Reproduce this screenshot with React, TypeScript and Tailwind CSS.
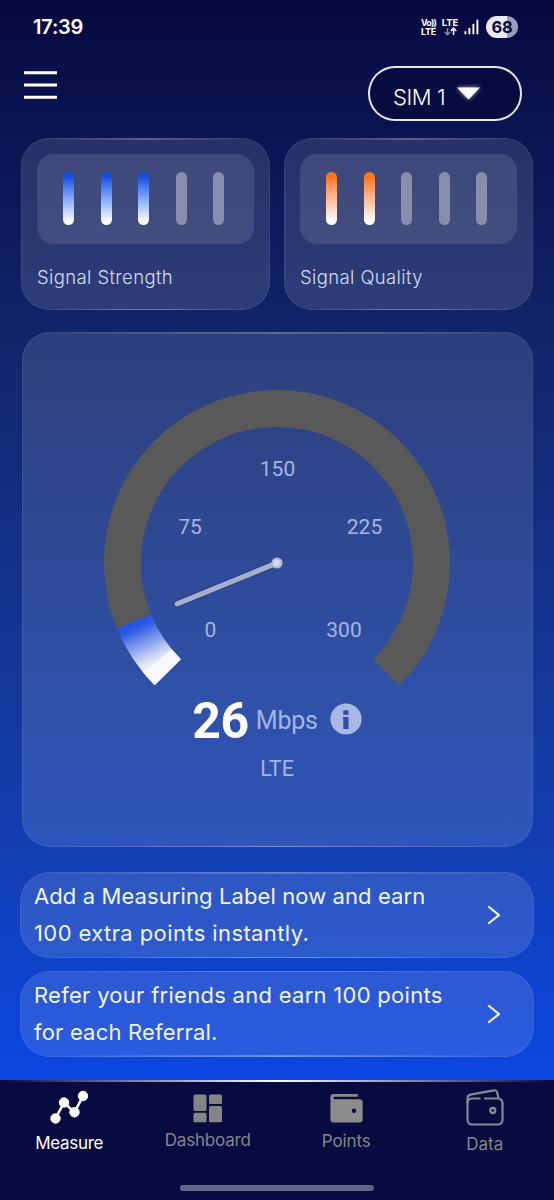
import type { ReactNode } from 'react';
import clsx from 'clsx';

interface GlassProps {
  className?: string;
  children: ReactNode;
}

// Translucent panel, its top and bottom edges light up towards the middle
function Glass({ className, children }: GlassProps) {
  return (
    <div className={clsx('relative bg-white/[0.12] border border-white/[0.07]', className)}>
      <span className="absolute -top-px left-6 right-6 h-[1.5px] bg-gradient-to-r from-transparent via-white/20 to-transparent" />
      <span className="absolute -bottom-px left-6 right-6 h-[1.5px] bg-gradient-to-r from-transparent via-white/30 to-transparent" />
      {children}
    </div>
  );
}

function StatusBar() {
  return (
    <div className="h-[54px] pl-[33px] pr-9 flex items-center justify-between text-white">
      <span className="text-[20px] font-semibold leading-none tracking-[-0.2px]">17:39</span>
      <div className="flex items-center">
        <div className="w-[17px] text-[9px] leading-[9px] font-bold text-center whitespace-nowrap tracking-[-0.3px]">
          <div className="tracking-[-0.8px]">Vo))</div>
          <div>LTE</div>
        </div>
        <div className="ml-[4px] w-[18px] flex flex-col items-center">
          <span className="text-[9.5px] leading-[9px] font-bold">LTE</span>
          <svg className="w-[13px] h-[9px]" viewBox="0 0 13 9" fill="none" strokeWidth="1.5">
            <path d="M3.5 1v6.5M.8 4.9l2.7 2.8 2.7-2.8" stroke="#8a8cab" />
            <path d="M9.5 8V1.2M6.8 4l2.7-2.8L12.2 4" stroke="white" />
          </svg>
        </div>
        <svg className="ml-[5px] w-[15px] h-[16px]" viewBox="0 0 15 16" stroke="white" strokeWidth="1.9" strokeLinecap="round">
          <path d="M1.4 13v1.6M5.4 9.6v5M9.4 5.8v8.8M13.4 1.4v13.2" />
        </svg>
        <div className="ml-[7px] w-[32px] h-[22px] rounded-full bg-gradient-to-r from-[#e9eaf3] from-66% to-[#9b9cb9] to-66% flex items-center justify-center">
          <span className="text-[16.5px] leading-none font-bold text-[#090c42] tracking-[-0.3px]">68</span>
        </div>
      </div>
    </div>
  );
}

function Header() {
  return (
    <div className="h-[84px] pl-6 pr-8 pt-[12px] flex items-start justify-between">
      <button className="mt-[5px] flex" aria-label="Menu">
        <svg className="w-[33px] h-[29px]" viewBox="0 0 33 29" stroke="white" strokeWidth="3">
          <path d="M0 1.8h33M0 14h33M0 26.2h33" />
        </svg>
      </button>
      <button className="w-[154px] h-[55px] pl-[23px] rounded-[27px] border-2 border-white/90 bg-[#080b40] flex items-center text-white">
        <span className="mt-[6px] text-[22px] leading-none font-light tracking-[-0.4px]">SIM 1</span>
        <svg className="ml-[8px] -mt-[1px] w-[30px] h-[22px] drop-shadow-[0_0_2px_rgba(255,255,255,0.7)]" viewBox="0 0 30 22">
          <path d="M4 5.5h23L15.5 17.5z" fill="white" />
        </svg>
      </button>
    </div>
  );
}

interface SignalCardProps {
  label: string;
  level: number;
  barClass: string;
}

function SignalCard({ label, level, barClass }: SignalCardProps) {
  return (
    <Glass className="w-[249px] h-[172px] rounded-[28px] px-[15px] pt-[15px]">
      <div className="h-[90px] rounded-[17px] bg-white/[0.11] pl-[26px] pt-[18px] flex gap-[26.5px]">
        {[0, 1, 2, 3, 4].map((i) => (
          <span
            key={i}
            className={clsx('w-[11px] h-[53px] rounded-full', i < level ? barClass : 'bg-[#898eae]')}
          />
        ))}
      </div>
      <div className="mt-[20px] text-[18.5px] leading-[26px] font-light text-[#d5dcf2] whitespace-nowrap tracking-[0.38px]">
        {label}
      </div>
    </Glass>
  );
}

const MAX_SPEED = 300;
const CX = 254;
const CY = 230;
const RADIUS = 154.5;

function point(angle: number, r: number) {
  const rad = (angle * Math.PI) / 180;
  return [CX + r * Math.cos(rad), CY + r * Math.sin(rad)];
}

function arc(from: number, to: number) {
  const [x1, y1] = point(from, RADIUS);
  const [x2, y2] = point(to, RADIUS);
  return `M${x1} ${y1}A${RADIUS} ${RADIUS} 0 ${to - from > 180 ? 1 : 0} 1 ${x2} ${y2}`;
}

const ticks = [
  { value: 0, x: 187.5, y: 304 },
  { value: 75, x: 167, y: 201 },
  { value: 150, x: 254.5, y: 143 },
  { value: 225, x: 341.5, y: 201 },
  { value: 300, x: 321, y: 304 },
];

function Gauge({ speed }: { speed: number }) {
  const end = 135 + (speed / MAX_SPEED) * 270;
  const [nx, ny] = point(end - 0.6, 108);

  return (
    <svg className="w-[509px] h-[360px] block" viewBox="0 0 509 360">
      <defs>
        <linearGradient id="speed" gradientUnits="userSpaceOnUse" x1="110" y1="284" x2="133" y2="335">
          <stop offset="0" stopColor="#1a4de8" />
          <stop offset="0.22" stopColor="#2f5be5" />
          <stop offset="0.85" stopColor="#dfe4f6" />
          <stop offset="1" stopColor="#f6f7fc" />
        </linearGradient>
      </defs>
      <path d={arc(end - 1, 405)} fill="none" stroke="#595959" strokeWidth="37" />
      <path d={arc(135, end - 0.6)} fill="none" stroke="url(#speed)" strokeWidth="37" />
      <path d={arc(135, 140.6)} fill="none" stroke="#f8f9fd" strokeWidth="37" />
      {ticks.map((t) => (
        <text
          key={t.value}
          x={t.x}
          y={t.y}
          textAnchor="middle"
          fill="#a5b5de"
          className="font-['Roboto',sans-serif] text-[21px]"
        >
          {t.value}
        </text>
      ))}
      <path d={`M${CX} ${CY}L${nx} ${ny}`} stroke="#26397d" strokeWidth="7" strokeLinecap="round" />
      <path d={`M${CX} ${CY}L${nx} ${ny}`} stroke="#a5aecd" strokeWidth="5.2" strokeLinecap="round" />
      <circle cx={CX} cy={CY} r="5.6" fill="#aeb8dc" />
      <circle cx={CX - 0.5} cy={CY} r="3.4" fill="#d5dbe9" />
    </svg>
  );
}

function SpeedCard() {
  return (
    <Glass className="w-[511px] h-[515px] rounded-[28px] font-['Roboto',sans-serif]">
      <Gauge speed={26} />
      <div className="h-[56px] flex items-center justify-center text-[#a5b5e2]">
        <span className="-mt-[1px] text-[50px] leading-none font-bold text-white tracking-[-0.4px]">26</span>
        <span className="ml-[7px] -mt-[2px] text-[25px] leading-none tracking-[-0.2px]">Mbps</span>
        <svg className="ml-[12px] -mt-[4px] w-[32px] h-[32px]" viewBox="0 0 32 32">
          <circle cx="16" cy="16" r="15.6" fill="#a9b8e3" />
          <path d="M13.3 7.2h5.2v4.6h-5.2zM13 14h5.5v12h-5.2V16H13z" fill="#2c4da8" />
        </svg>
      </div>
      <div className="mt-[7px] text-center text-[21.5px] leading-[26px] text-[#a5b5e2]">LTE</div>
    </Glass>
  );
}

interface PromoProps {
  lines: { text: string; spacing: string }[];
}

function Promo({ lines }: PromoProps) {
  return (
    <Glass className="w-[514px] h-[86px] rounded-[30px] pl-[13px] pr-[32px] flex items-center justify-between">
      <div className="text-[22px] leading-[37px] text-[#f1f4fd] whitespace-nowrap">
        {lines.map((line) => (
          <div key={line.text} className={line.spacing}>
            {line.text}
          </div>
        ))}
      </div>
      <svg className="w-[14px] h-[20px]" viewBox="0 0 14 20" fill="none" stroke="#eef2fd" strokeWidth="2.2" strokeLinecap="round" strokeLinejoin="round">
        <path d="M2 2l10 8.2L2 18" />
      </svg>
    </Glass>
  );
}

function MeasureIcon() {
  return (
    <svg className="w-[40px] h-[36px]" viewBox="0 0 40 36" fill="white" stroke="white">
      <path d="M6.5 28.5L15 12.5l10.5 9.8L34 6" fill="none" strokeWidth="2.6" />
      <circle cx="6.5" cy="28.5" r="4.7" />
      <circle cx="15" cy="12.5" r="4.7" />
      <circle cx="25.5" cy="22.3" r="4.7" />
      <circle cx="34" cy="6" r="4.7" />
    </svg>
  );
}

function DashboardIcon() {
  return (
    <svg className="w-[30px] h-[30px]" viewBox="0 0 30 30" fill="#858585">
      <rect x="0.500" y="0.500" width="13" height="16.500" rx="1.600" />
      <rect x="0.500" y="18.800" width="13" height="9.500" rx="1.600" />
      <rect x="16" y="0.500" width="13" height="9.500" rx="1.600" />
      <rect x="16" y="11.900" width="13" height="16.400" rx="1.600" />
    </svg>
  );
}

function PointsIcon() {
  return (
    <svg className="w-[33px] h-[30px]" viewBox="0 0 33 30">
      <path d="M27.8 0H3.6A3.2 3.2 0 0 0 .4 3.2V25.6a3 3 0 0 0 3 3H29.6a3 3 0 0 0 3-3V8.3a3 3 0 0 0-3-3H3.6V2.8H27.8z" fill="#8c8c8c" />
      <circle cx="24" cy="16.8" r="2.2" fill="#080b40" />
    </svg>
  );
}

function DataIcon() {
  return (
    <svg className="w-[38px] h-[37px]" viewBox="0 0 38 37" fill="none" stroke="#88898f" strokeWidth="2.2">
      <path d="M14.5 9.5H6A4.5 4.5 0 0 0 1.5 14v17A4.5 4.5 0 0 0 6 35.5h26a4.5 4.5 0 0 0 4.5-4.5V14A4.5 4.5 0 0 0 32 9.5H18.2" />
      <path d="M1.5 14V9.5q0-3.2 3-3.8L28 1.3q2.4-.3 3.2 2l1.3 6.2" />
      <circle cx="26.8" cy="21.5" r="2.5" strokeWidth="2.3" />
    </svg>
  );
}

const tabs = [
  { label: 'Measure', icon: <MeasureIcon />, box: 'pt-[10px]', text: 'mt-[6px] text-[17px] text-white tracking-[-0.3px]' },
  { label: 'Dashboard', icon: <DashboardIcon />, box: 'pt-[14px]', text: 'mt-[5px] text-[17px] text-[#85858b] tracking-[-0.2px]' },
  { label: 'Points', icon: <PointsIcon />, box: 'pt-[14px]', text: 'mt-[6px] text-[17px] text-[#85858b] tracking-[-0.1px]' },
  { label: 'Data', icon: <DataIcon />, box: 'pt-[9px]', text: 'mt-[7px] text-[17px] text-[#85858b] tracking-[0px]' },
];

function BottomNav() {
  return (
    <nav className="relative h-[120px] bg-[#080b40]">
      <span className="absolute top-0 inset-x-0 h-[2px] bg-gradient-to-r from-transparent via-white to-transparent" />
      <div className="grid grid-cols-4 h-[105px]">
        {tabs.map((tab) => (
          <button key={tab.label} className={clsx('flex flex-col items-center justify-start', tab.box)}>
            {tab.icon}
            <span className={clsx('leading-[22px]', tab.text)}>{tab.label}</span>
          </button>
        ))}
      </div>
      <div className="mx-auto w-[194px] h-[6px] rounded-full bg-[#636488]" />
    </nav>
  );
}

export default function App() {
  return (
    <div className="w-[554px] h-[1200px] overflow-hidden flex flex-col bg-[linear-gradient(to_bottom,#07093e_0px,#0a1453_130px,#11266b_350px,#13399d_700px,#123fb5_860px,#0c46e0_1070px)] font-['Inter',sans-serif]">
      <StatusBar />
      <Header />
      <main className="flex-1 flex flex-col items-center">
        <div className="flex gap-[14px]">
          <SignalCard
            label="Signal Strength"
            level={3}
            barClass="bg-gradient-to-b from-[#174fe4] from-10% to-white to-95%"
          />
          <SignalCard
            label="Signal Quality"
            level={2}
            barClass="bg-gradient-to-b from-[#fd7616] from-10% to-white to-95%"
          />
        </div>
        <div className="mt-[22px]">
          <SpeedCard />
        </div>
        <div className="mt-[25px] flex flex-col gap-[12.5px]">
          <Promo
            lines={[
              { text: 'Add a Measuring Label now and earn', spacing: 'tracking-[0.1px]' },
              { text: '100 extra points instantly.', spacing: 'tracking-[0.4px]' },
            ]}
          />
          <Promo
            lines={[
              { text: 'Refer your friends and earn 100 points', spacing: 'tracking-[0.28px]' },
              { text: 'for each Referral.', spacing: 'tracking-[0.18px]' },
            ]}
          />
        </div>
      </main>
      <BottomNav />
    </div>
  );
}
